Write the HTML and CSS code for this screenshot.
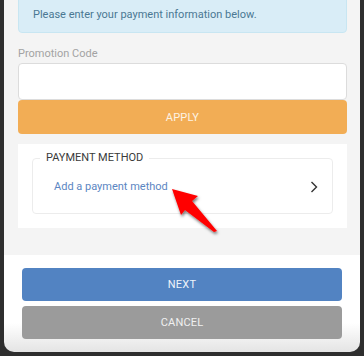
FILE: index.html
```html
<!DOCTYPE html>
<html lang="en">

<head>
    <meta charset="UTF-8">
    <meta name="viewport" content="width=device-width, initial-scale=1.0">
    <title>Payment</title>
    <link rel="stylesheet" href="styles.css">
</head>

<body>
    <div class="modal">
        <div class="modal-body">
            <div class="alert">Please enter your payment information below.</div>
            <label class="label" for="promo">Promotion Code</label>
            <input class="input" id="promo" type="text">
            <button class="btn btn-apply">APPLY</button>
            <div class="payment">
                <fieldset class="payment-box">
                    <legend>PAYMENT METHOD</legend>
                    <a class="payment-row" href="#">
                        <span>Add a payment method</span>
                        <svg class="chevron" width="8" height="12" viewBox="0 0 8 12">
                            <path d="M1.5 1 L6.5 6 L1.5 11" fill="none" stroke="#333" stroke-width="1.4" />
                        </svg>
                    </a>
                </fieldset>
                <svg class="pointer" width="70" height="60" viewBox="0 0 70 60">
                    <defs>
                        <filter id="shadow" x="-30%" y="-30%" width="160%" height="160%">
                            <feDropShadow dx="1" dy="2" stdDeviation="1.5" flood-color="#000" flood-opacity="0.55" />
                        </filter>
                    </defs>
                    <polygon points="2,2 28,9 22,14 47,44 44,45 15,23 11,28" fill="#f00" filter="url(#shadow)" />
                </svg>
            </div>
        </div>
        <div class="modal-footer">
            <button class="btn btn-next">NEXT</button>
            <button class="btn btn-cancel">CANCEL</button>
        </div>
    </div>
</body>

</html>
```

FILE: styles.css
```css
* {
    box-sizing: border-box;
    margin: 0;
    padding: 0;
}

body {
    background: #2e2e2e;
    font-family: Roboto, "Liberation Sans", sans-serif;
    font-size: 11px;
    height: 356px;
    overflow: hidden;
}

.modal {
    margin: -12px 4px 0 4px;
    width: 356px;
    border-radius: 0 0 10px 10px;
    overflow: hidden;
}

.modal-body {
    background: #f4f4f4;
    padding: 0 13px 27px 14px;
}

.alert {
    background: #d9edf7;
    border: 1px solid #c8e6f2;
    border-radius: 4px;
    color: #4a7893;
    height: 45px;
    padding: 19px 0 0 14px;
    line-height: 14px;
}

.label {
    display: block;
    color: #a3a3a3;
    line-height: 14px;
    margin-top: 14px;
}

.input {
    display: block;
    width: 100%;
    height: 37px;
    margin-top: 2px;
    border: 1px solid #dcdcdc;
    border-radius: 4px;
    background: #fff;
}

.btn {
    display: block;
    width: 100%;
    border: none;
    border-radius: 4px;
    font-family: inherit;
    font-size: 11px;
    letter-spacing: 0.2px;
}

.btn-apply {
    height: 34px;
    background: #f2ad55;
    color: #fdf3e4;
}

.payment {
    position: relative;
    background: #fff;
    margin-top: 10px;
    padding: 7px 14px 14px 14px;
}

.payment-box {
    border: 1px solid #ececec;
    border-radius: 4px;
    padding: 0 14px 0 21px;
    height: 63px;
}

.payment-box legend {
    color: #3a3a3a;
    padding: 0 6px;
    margin-left: -14px;
    line-height: 14px;
}

.payment-row {
    display: flex;
    align-items: center;
    justify-content: space-between;
    color: #5b86c2;
    text-decoration: none;
    height: 30px;
    margin-top: 6px;
}

.chevron {
    margin-top: 1px;
}

.pointer {
    position: absolute;
    left: 152px;
    top: 43px;
}

.modal-footer {
    background: linear-gradient(#fff 70%, #e4e4e4);
    padding: 13px 18px 13px 18px;
}

.btn-next {
    height: 33px;
    background: #5283c2;
    color: #eef3fa;
}

.btn-cancel {
    height: 33px;
    margin-top: 5px;
    background: #9b9b9b;
    color: #f0f0f0;
}
```
